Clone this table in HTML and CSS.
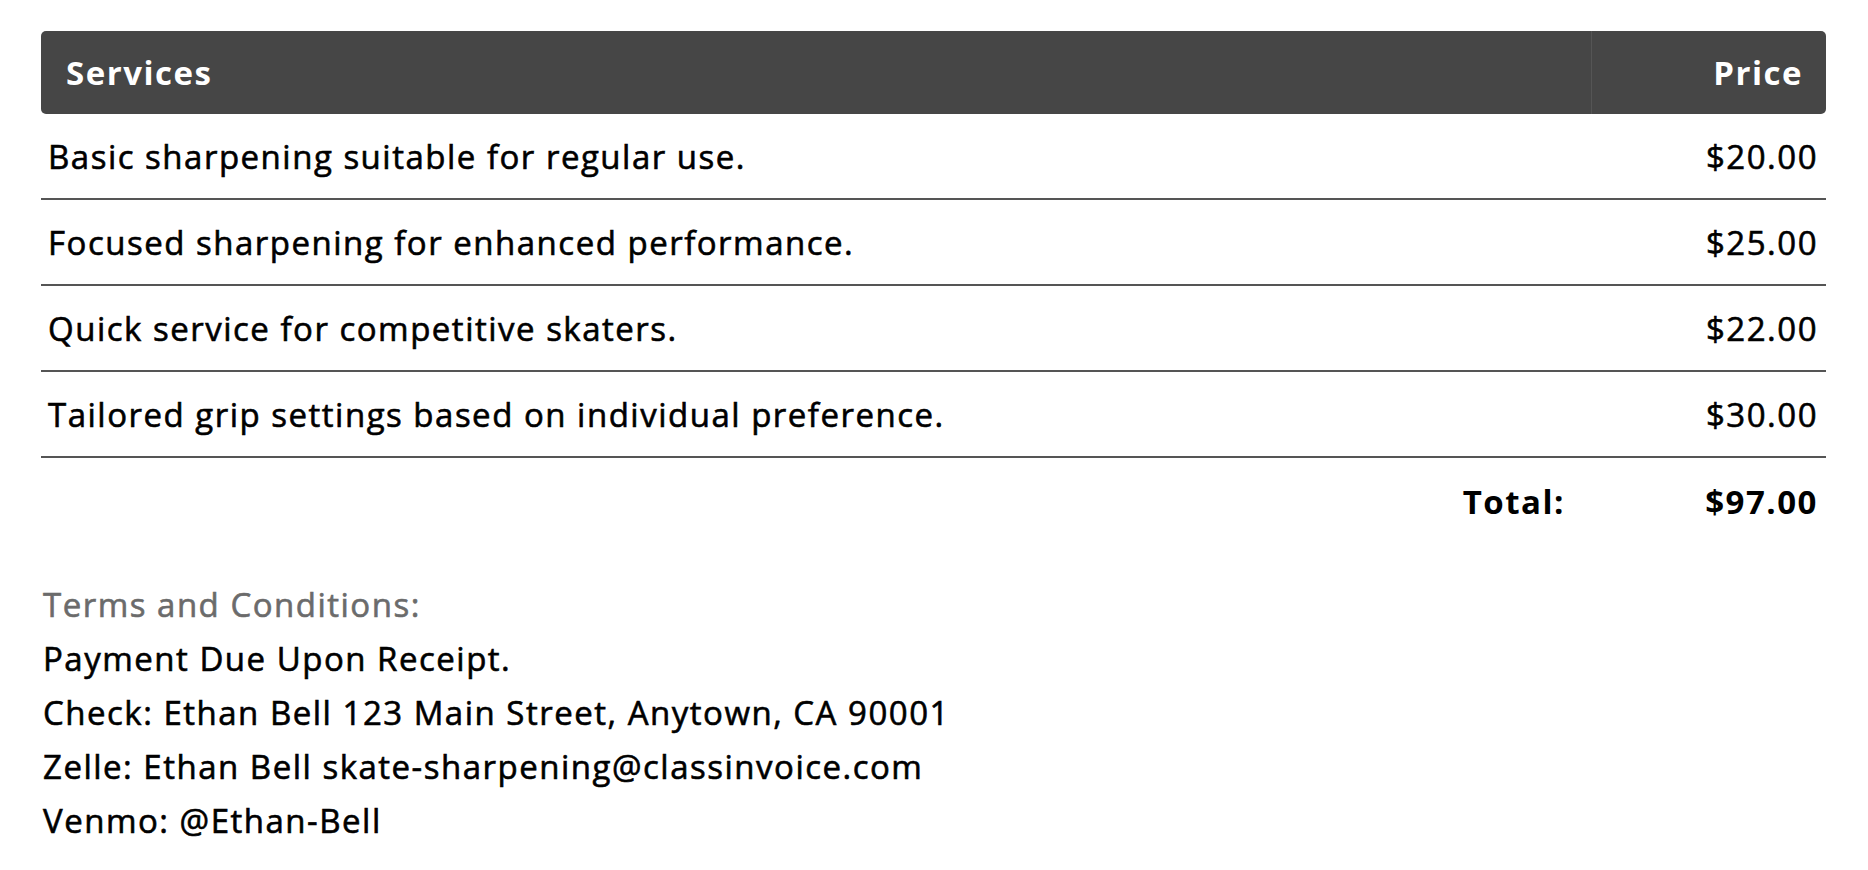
FILE: index.html
```html
<!DOCTYPE html>
<html>
<head>
<meta charset="utf-8">
<link rel="stylesheet" href="styles.css">
</head>
<body>
<main class="invoice">
  <table class="items">
    <thead>
      <tr>
        <th class="col-service">Services</th>
        <th class="col-price">Price</th>
      </tr>
    </thead>
    <tbody>
      <tr><td class="col-service">Basic sharpening suitable for regular use.</td><td class="col-price">$20.00</td></tr>
      <tr><td class="col-service">Focused sharpening for enhanced performance.</td><td class="col-price">$25.00</td></tr>
      <tr><td class="col-service">Quick service for competitive skaters.</td><td class="col-price">$22.00</td></tr>
      <tr><td class="col-service">Tailored grip settings based on individual preference.</td><td class="col-price">$30.00</td></tr>
    </tbody>
    <tfoot>
      <tr><td class="total-label">Total:</td><td class="col-price total-value">$97.00</td></tr>
    </tfoot>
  </table>
  <section class="terms">
    <h2 class="terms-title">Terms and Conditions:</h2>
    <p>Payment Due Upon Receipt.</p>
    <p>Check: Ethan Bell 123 Main Street, Anytown, CA 90001</p>
    <p>Zelle: Ethan Bell skate-sharpening@classinvoice.com</p>
    <p>Venmo: @Ethan-Bell</p>
  </section>
</main>
</body>
</html>
```
FILE: styles.css
```css
html, body {
  margin: 0;
  padding: 0;
  background: #ffffff;
}
body {
  font-family: "Open Sans", "Noto Sans", sans-serif;
  color: #000;
  letter-spacing: 1.5px;
}
.invoice {
  padding: 31px 42px 0 41px;
}
.items {
  width: 100%;
  border-collapse: separate;
  border-spacing: 0;
  font-size: 33px;
  font-weight: 500;
}
.items th {
  background: #464646;
  color: #fff;
  font-weight: 700;
  height: 83px;
  padding: 0;
  text-align: left;
}
.items th.col-service {
  padding-left: 25px;
  border-radius: 5px 0 0 5px;
}
.items th.col-price {
  width: 235px;
  text-align: right;
  padding-right: 23px;
  border-radius: 0 5px 5px 0;
  border-left: 1px solid #555;
  box-sizing: border-box;
}
.items td {
  height: 84px;
  padding: 0 8px 0 7px;
  border-bottom: 2px solid #555;
  vertical-align: middle;
  -webkit-text-stroke: 0.6px #000;
}
.items td.col-price {
  text-align: right;
}
.items tfoot td {
  border-bottom: none;
  font-weight: 700;
  height: 86px;
  -webkit-text-stroke: 0;
}
.items .total-label {
  text-align: right;
  padding-right: 26px;
}
.terms {
  margin-top: 34px;
  padding-left: 2px;
  font-size: 33px;
  font-weight: 500;
  line-height: 54px;
  -webkit-text-stroke: 0.6px #000;
}
.terms-title {
  margin: 0;
  font-size: 33px;
  font-weight: 500;
  color: #6b6b6b;
  -webkit-text-stroke: 0.6px #6b6b6b;
}
.terms p {
  margin: 0;
}
```
